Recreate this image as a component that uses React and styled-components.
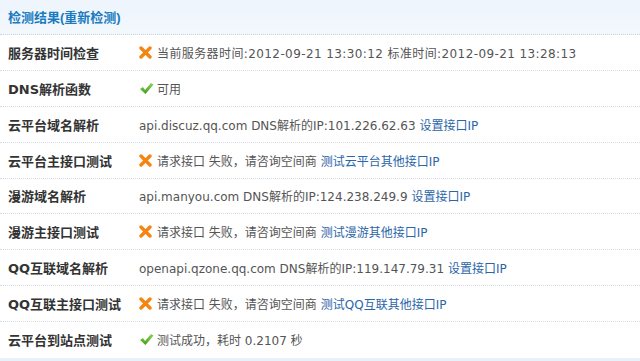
import styled, { createGlobalStyle } from "styled-components"

const GlobalStyle = createGlobalStyle`
    html, body {
        margin: 0;
        padding: 0;
        background: #fff;
    }
    body {
        font-family: "DejaVu Sans", "Noto Sans CJK SC", sans-serif;
    }
`

const rows = [
    { label: "服务器时间检查", icon: "fail", text: "当前服务器时间:2012-09-21 13:30:12 标准时间:2012-09-21 13:28:13", spaced: true },
    { label: "DNS解析函数", icon: "ok", text: "可用" },
    { label: "云平台域名解析", text: "api.discuz.qq.com DNS解析的IP:101.226.62.63", link: "设置接口IP" },
    { label: "云平台主接口测试", icon: "fail", text: "请求接口 失败，请咨询空间商", link: "测试云平台其他接口IP" },
    { label: "漫游域名解析", text: "api.manyou.com DNS解析的IP:124.238.249.9", link: "设置接口IP" },
    { label: "漫游主接口测试", icon: "fail", text: "请求接口 失败，请咨询空间商", link: "测试漫游其他接口IP" },
    { label: "QQ互联域名解析", text: "openapi.qzone.qq.com DNS解析的IP:119.147.79.31", link: "设置接口IP" },
    { label: "QQ互联主接口测试", icon: "fail", text: "请求接口 失败，请咨询空间商", link: "测试QQ互联其他接口IP" },
    { label: "云平台到站点测试", icon: "ok", text: "测试成功，耗时 0.2107 秒", last: true },
]

const FailIcon = () => (
    <svg width="13" height="13" viewBox="0 0 13 13">
        <path d="M2 2 L11 11 M11 2 L2 11" stroke="#f6850f" strokeWidth="3.4" strokeLinecap="round" />
    </svg>
)

const OkIcon = () => (
    <svg width="15" height="13" viewBox="0 0 15 13">
        <defs>
            <linearGradient id="ok" x1="0" y1="0" x2="0" y2="1">
                <stop offset="0" stopColor="#8fd34e" />
                <stop offset="1" stopColor="#3f9e1d" />
            </linearGradient>
        </defs>
        <path d="M1 7 L4 5 L6 8 L12 1 L14.5 2.5 L6.5 12 Z" fill="url(#ok)" />
    </svg>
)

const App = () => {
    return (
        <>
            <GlobalStyle />
            <Panel>
                <Header>
                    <Title>检测结果(重新检测)</Title>
                </Header>
                {rows.map((row) => (
                    <Row key={row.label} $last={row.last}>
                        <Label>{row.label}</Label>
                        <Value>
                            {row.icon === "fail" && <IconBox><FailIcon /></IconBox>}
                            {row.icon === "ok" && <IconBox><OkIcon /></IconBox>}
                            <Text $spaced={row.spaced}>{row.text}</Text>
                            {row.link && <Link>{row.link}</Link>}
                        </Value>
                    </Row>
                ))}
                <Footer />
            </Panel>
        </>
    )
}

const Panel = styled.div`
    width: 640px;
    height: 361px;
    overflow: hidden;
    display: flex;
    flex-direction: column;
`

const Header = styled.div`
    height: 34px;
    display: flex;
    align-items: center;
    padding: 0 8px;
    background: linear-gradient(#edf4fc, #f3f8fd);
    border-bottom: 1px dotted #c9d6e3;
`

const Title = styled.div`
    font-family: "Liberation Sans", "Noto Sans CJK SC", sans-serif;
    font-size: 13px;
    font-weight: bold;
    color: #1a7bc0;
`

const Row = styled.div`
    height: 35px;
    display: grid;
    grid-template-columns: 131px 1fr;
    align-items: center;
    padding-left: 8px;
    border-bottom: 1px dotted ${(props) => (props.$last ? "transparent" : "#d3dbe3")};
    font-size: 13px;
`

const Label = styled.div`
    font-weight: bold;
    color: #333;
`

const Value = styled.div`
    display: flex;
    align-items: center;
    color: #555;
    white-space: nowrap;
    font-size: 12px;
`

const Text = styled.span`
    letter-spacing: ${(props) => (props.$spaced ? "0.4px" : "0")};
`

const IconBox = styled.span`
    display: inline-flex;
    width: 18px;
`

const Link = styled.a`
    margin-left: 4px;
    color: #2b66a8;
    cursor: pointer;
`

const Footer = styled.div`
    height: 3px;
    background: #e8f1fa;
`

export default App
